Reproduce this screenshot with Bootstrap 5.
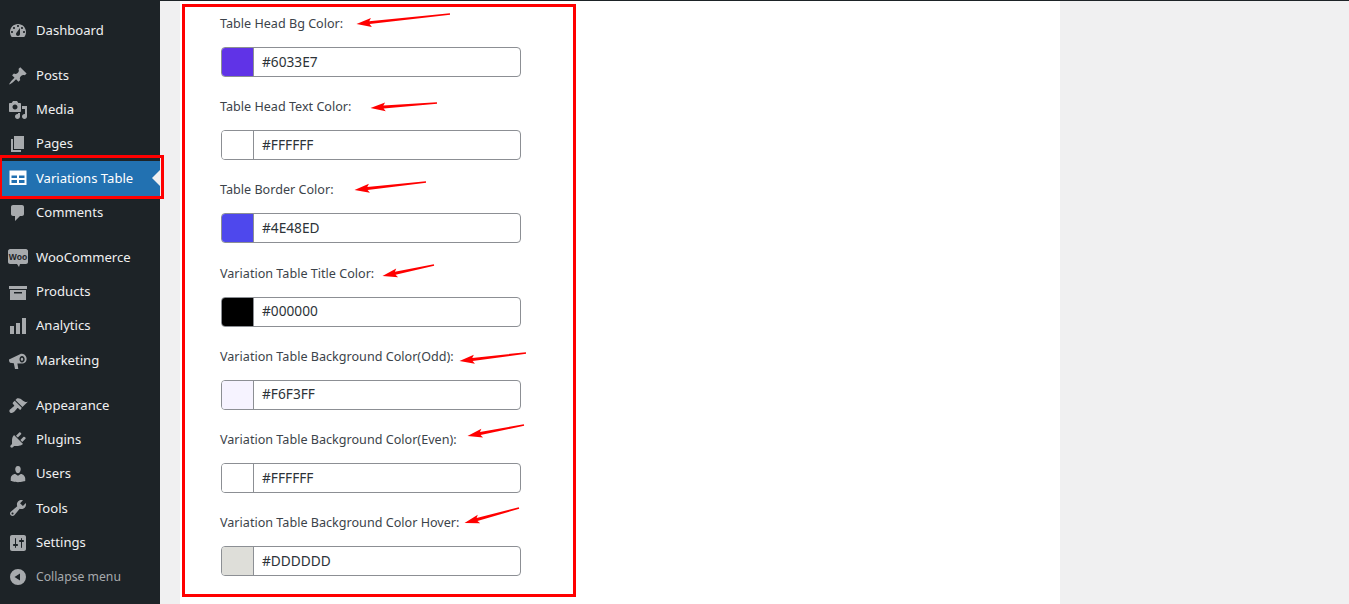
<!DOCTYPE html>
<html lang="en">
  <head>
    <meta charset="UTF-8" />
    <title>Variations Table settings</title>
    <link href="https://cdn.jsdelivr.net/npm/bootstrap@5.3.0/dist/css/bootstrap.min.css" rel="stylesheet" />
    <style>
      html, body { height: 604px; overflow: hidden; }
      body { background: #f0f0f1; font-family: "Noto Sans", "Liberation Sans", sans-serif; }
      .wp-side { width: 160px; height: 604px; background: #1d2327; padding-top: 13.4px; }
      .wp-item { height: 34.25px; color: #f0f0f1; font-size: 13.1px; padding-left: 8px; gap: 8px; position: relative; }
      .wp-item svg { width: 20px; height: 20px; fill: #a7aaad; flex: none; }
      .wp-gap { margin-top: 10.9px; }
      .wp-current { background: #2271b1; color: #fff; }
      .wp-current svg { fill: #fff; }
      .wp-current::after { content: ""; position: absolute; right: 0; top: 9px; border: 8px solid transparent; border-right-color: #f0f0f1; border-left-width: 0; }
      .wp-collapse { color: #a7aaad; font-size: 12.2px; }
      .wp-main { height: 604px; border-top: 1px solid #1d2327; padding-left: 20px; }
      .wp-panel { width: 880px; height: 603px; background: #fff; padding: 13.1px 0 0 40px; }
      .opt-row { height: 83.17px; }
      .opt-label { color: #3c434a; font-size: 12.6px; line-height: 20px; margin-bottom: 13px; }
      .opt-group { width: 300px; height: 30px; margin-left: 1px; border: 1px solid #8c8f94; border-radius: 4px; overflow: hidden; }
      .opt-swatch { width: 32px; border-right: 1px solid #8c8f94; flex: none; }
      .opt-value { color: #2c3338; font-size: 13.7px; padding-left: 8px; }
      .swatch-a { background: #6033e7; }
      .swatch-b { background: #fff; }
      .swatch-c { background: #4e48ed; }
      .swatch-d { background: #000; }
      .swatch-e { background: #f6f3ff; }
      .swatch-f { background: #deded9; }
      .mark-frame { position: absolute; border: 3px solid #f00; pointer-events: none; }
      .mark-form { left: 182px; top: 4px; width: 394px; height: 593px; }
      .mark-menu { left: -1px; top: 155px; width: 165px; height: 44px; }
      .mark-arrows { position: absolute; left: 0; top: 0; width: 1349px; height: 604px; fill: #f00; pointer-events: none; }
    </style>
  </head>
  <body>
    <div class="d-flex">
      <div class="wp-side">
        <div class="wp-item d-flex align-items-center">
          <svg viewBox="0 0 20 20"><path fill-rule="evenodd" d="M3.76 16h12.48c1.1-1.37 1.76-3.11 1.76-5 0-4.42-3.58-8-8-8s-8 3.58-8 8c0 1.89.66 3.63 1.76 5zM10 4c.55 0 1 .45 1 1s-.45 1-1 1-1-.45-1-1 .45-1 1-1zM6 6c.55 0 1 .45 1 1s-.45 1-1 1-1-.45-1-1 .45-1 1-1zm8 0c.55 0 1 .45 1 1s-.45 1-1 1-1-.45-1-1 .45-1 1-1zm-5.37 5.55L12 7v6c0 1.1-.9 2-2 2s-2-.9-2-2c0-.57.24-1.08.63-1.45zM4 10c.55 0 1 .45 1 1s-.45 1-1 1-1-.45-1-1 .45-1 1-1zm12 0c.55 0 1 .45 1 1s-.45 1-1 1-1-.45-1-1 .45-1 1-1z"/></svg>
          Dashboard
        </div>
        <div class="wp-item wp-gap d-flex align-items-center">
          <svg viewBox="0 0 20 20"><path d="M10.44 3.02l1.82-1.82 6.36 6.35-1.83 1.82c-1.05-.68-2.48-.57-3.41.36l-.75.75c-.92.93-1.04 2.35-.35 3.41l-1.83 1.82-2.41-2.41-2.8 2.79c-.42.42-3.38 2.71-3.8 2.29s1.86-3.39 2.28-3.81l2.79-2.79L4.1 9.36l1.83-1.82c1.05.69 2.48.57 3.4-.36l.75-.75c.93-.92 1.05-2.35.36-3.41z"/></svg>
          Posts
        </div>
        <div class="wp-item d-flex align-items-center">
          <svg viewBox="0 0 20 20"><path fill-rule="evenodd" d="M13 11V4c0-.55-.45-1-1-1h-1.67L9 1H5L3.67 3H2c-.55 0-1 .45-1 1v7c0 .55.45 1 1 1h10c.55 0 1-.45 1-1zM7 4.5c1.38 0 2.5 1.12 2.5 2.5S8.38 9.5 7 9.5 4.5 8.38 4.5 7 5.62 4.5 7 4.5zM14 6h5v10.5c0 1.38-1.12 2.5-2.5 2.5S14 17.88 14 16.5s1.12-2.5 2.5-2.5c.17 0 .34.02.5.05V9h-3V6zm-4 8.05V13h2v3.5c0 1.38-1.12 2.5-2.5 2.5S7 17.88 7 16.5 8.12 14 9.5 14c.17 0 .34.02.5.05z"/></svg>
          Media
        </div>
        <div class="wp-item d-flex align-items-center">
          <svg viewBox="0 0 20 20"><path d="M6 15V2h10v13H6zm-1 1h8v2H3V5h2v11z"/></svg>
          Pages
        </div>
        <div class="wp-item wp-current d-flex align-items-center">
          <svg viewBox="0 0 20 20"><path fill-rule="evenodd" d="M1.500 2.500h17v14.500h-17V2.500zm2 5v2.500h5.500V7.500H3.500zm7.500 0v2.500h5.500V7.500H11zm-7.500 4.500v3h5.500v-3H3.500zm7.500 0v3h5.500v-3H11z"/></svg>
          Variations Table
        </div>
        <div class="wp-item d-flex align-items-center">
          <svg viewBox="0 0 20 20"><path d="M5 2h9c1.1 0 2 .9 2 2v7c0 1.1-.9 2-2 2h-2l-5 5v-5H5c-1.1 0-2-.9-2-2V4c0-1.1.9-2 2-2z"/></svg>
          Comments
        </div>
        <div class="wp-item wp-gap d-flex align-items-center">
          <svg viewBox="0 0 20 20"><path d="M2 1h16c1 0 2 1 2 2v11c0 1-1 2-2 2h-6l-1 3-2-3H2c-1 0-2-1-2-2V3c0-1 1-2 2-2z"/><text x="10" y="11.500" text-anchor="middle" font-size="8.500" font-weight="700" fill="#1d2327" font-family="Liberation Sans, sans-serif">Woo</text></svg>
          WooCommerce
        </div>
        <div class="wp-item d-flex align-items-center">
          <svg viewBox="0 0 20 20"><path fill-rule="evenodd" d="M19 4v3H1V4h18zM2 8h16v10H2V8zm4 2v1.5h8V10H6z"/></svg>
          Products
        </div>
        <div class="wp-item d-flex align-items-center">
          <svg viewBox="0 0 20 20"><path d="M18 18V2h-4v16h4zm-6 0V7H8v11h4zm-6 0v-8H2v8h4z"/></svg>
          Analytics
        </div>
        <div class="wp-item d-flex align-items-center">
          <svg viewBox="0 0 20 20"><path fill-rule="evenodd" d="M1 8.500 12 3.200c2.600-1.200 5.600.4 6.400 3.200.8 2.900-.8 5.600-3.600 6L9.400 12.600l.9 5.400H7l-1.200-5.700-3.800-.5c-.7-.9-1.100-2.300-1-3.300zM14 5c-1.500 0-2.500 1.400-2.500 3.300s1 3.200 2.500 3.200 2.700-1.300 2.700-3.200S15.500 5 14 5zm0 1.800c.7 0 1.200.7 1.200 1.500s-.5 1.500-1.200 1.500-1.200-.7-1.200-1.500.5-1.500 1.200-1.500z"/></svg>
          Marketing
        </div>
        <div class="wp-item wp-gap d-flex align-items-center">
          <svg viewBox="0 0 20 20"><path d="M14.48 11.06L7.41 3.99l1.5-1.5c.5-.56 2.3-.47 3.51.32 1.21.8 1.43 1.28 2.91 2.1 1.18.64 2.45 1.26 4.45.85zm-.71.71L6.7 4.7 4.93 6.47c-.39.39-.39 1.02 0 1.41l1.06 1.06c.39.39.39 1.03 0 1.42-.6.6-1.43 1.11-2.21 1.69-.35.26-.7.53-1.01.84C1.43 13.23.75 15.13 2 16.38c1.25 1.25 3.15.57 4.49-.77.31-.31.58-.66.84-1.01.58-.78 1.09-1.61 1.69-2.21.39-.39 1.03-.39 1.42 0l1.06 1.06c.39.39 1.02.39 1.41 0z"/></svg>
          Appearance
        </div>
        <div class="wp-item d-flex align-items-center">
          <svg viewBox="0 0 20 20"><path d="M13.11 4.36L9.87 7.6 8 5.73l3.24-3.24c.35-.34 1.05-.2 1.56.32.52.51.66 1.21.31 1.55zm-8 1.77l.91-1.12 9.01 9.01-1.19.84c-.71.71-2.63 1.16-3.82 1.16H6.14L4.9 17.26c-.59.59-1.54.59-2.12 0-.59-.58-.59-1.53 0-2.12l1.24-1.24v-3.88c0-1.13.4-3.19 1.09-3.89zm7.26 3.97l3.24-3.24c.34-.35 1.04-.21 1.55.31.52.51.66 1.21.31 1.55l-3.24 3.25z"/></svg>
          Plugins
        </div>
        <div class="wp-item d-flex align-items-center">
          <svg viewBox="0 0 20 20"><path d="M10 9.250c-2.270 0-2.730-3.440-2.730-3.440C7 4.020 7.820 2 9.970 2c2.160 0 2.980 2.020 2.710 3.810 0 0-.41 3.440-2.680 3.440zm0 2.570L12.720 10c2.390 0 4.520 2.330 4.520 4.530v2.490s-3.650 1.130-7.240 1.130c-3.650 0-7.240-1.130-7.240-1.130v-2.490c0-2.250 1.940-4.480 4.470-4.480z"/></svg>
          Users
        </div>
        <div class="wp-item d-flex align-items-center">
          <svg viewBox="0 0 20 20"><path fill-rule="evenodd" d="M16.68 9.77c-1.34 1.34-3.3 1.67-4.95.99l-5.41 6.52c-.99.99-2.59.99-3.58 0s-.99-2.59 0-3.57l6.52-5.42c-.68-1.65-.35-3.61.99-4.95 1.28-1.28 3.12-1.62 4.72-1.06l-2.89 2.89 2.82 2.82 2.86-2.87c.53 1.58.18 3.39-1.08 4.65zM3.81 16.21c.4.39 1.04.39 1.43 0 .4-.4.4-1.04 0-1.43-.39-.4-1.03-.4-1.43 0-.39.39-.39 1.03 0 1.43z"/></svg>
          Tools
        </div>
        <div class="wp-item d-flex align-items-center">
          <svg viewBox="0 0 20 20"><path fill-rule="evenodd" d="M18 16V4c0-1.100-.9-2-2-2H4c-1.100 0-2 .9-2 2v12c0 1.100.9 2 2 2h12c1.100 0 2-.9 2-2zM8 11h1c.55 0 1 .45 1 1s-.45 1-1 1H8v1.500c0 .28-.22.5-.5.5s-.5-.22-.5-.5V13H6c-.55 0-1-.45-1-1s.45-1 1-1h1V5.500c0-.28.22-.5.5-.5s.5.22.5.5V11zm5-2h-1c-.55 0-1-.45-1-1s.45-1 1-1h1V5.500c0-.28.22-.5.5-.5s.5.22.5.5V7h1c.55 0 1 .45 1 1s-.45 1-1 1h-1v5.500c0 .28-.22.5-.5.5s-.5-.22-.5-.5V9z"/></svg>
          Settings
        </div>
        <div class="wp-item wp-collapse d-flex align-items-center">
          <svg viewBox="0 0 20 20"><path fill-rule="evenodd" d="M10 2a8 8 0 1 0 0 16 8 8 0 0 0 0-16zm2 4.500v7L6.500 10z"/></svg>
          Collapse menu
        </div>
      </div>

      <div class="wp-main flex-grow-1">
        <div class="wp-panel">
          <div class="opt-row">
            <div class="opt-label">Table Head Bg Color:</div>
            <div class="opt-group d-flex"><div class="opt-swatch swatch-a"></div><div class="opt-value d-flex align-items-center">#6033E7</div></div>
          </div>
          <div class="opt-row">
            <div class="opt-label">Table Head Text Color:</div>
            <div class="opt-group d-flex"><div class="opt-swatch swatch-b"></div><div class="opt-value d-flex align-items-center">#FFFFFF</div></div>
          </div>
          <div class="opt-row">
            <div class="opt-label">Table Border Color:</div>
            <div class="opt-group d-flex"><div class="opt-swatch swatch-c"></div><div class="opt-value d-flex align-items-center">#4E48ED</div></div>
          </div>
          <div class="opt-row">
            <div class="opt-label">Variation Table Title Color:</div>
            <div class="opt-group d-flex"><div class="opt-swatch swatch-d"></div><div class="opt-value d-flex align-items-center">#000000</div></div>
          </div>
          <div class="opt-row">
            <div class="opt-label">Variation Table Background Color(Odd):</div>
            <div class="opt-group d-flex"><div class="opt-swatch swatch-e"></div><div class="opt-value d-flex align-items-center">#F6F3FF</div></div>
          </div>
          <div class="opt-row">
            <div class="opt-label">Variation Table Background Color(Even):</div>
            <div class="opt-group d-flex"><div class="opt-swatch swatch-b"></div><div class="opt-value d-flex align-items-center">#FFFFFF</div></div>
          </div>
          <div class="opt-row">
            <div class="opt-label">Variation Table Background Color Hover:</div>
            <div class="opt-group d-flex"><div class="opt-swatch swatch-f"></div><div class="opt-value d-flex align-items-center">#DDDDDD</div></div>
          </div>
        </div>
      </div>
    </div>

    <!-- red markup drawn on top of the screenshot -->
    <div class="mark-frame mark-form"></div>
    <div class="mark-frame mark-menu"></div>
    <svg class="mark-arrows" id="arrows" viewBox="0 0 1349 604"></svg>

    <script>
      // tail x, tail y, head x, head y
      const arrows = [
        [450, 14, 356.5, 24],
        [437, 103, 370.5, 108],
        [426, 182, 354.5, 190],
        [434, 265, 382.5, 276],
        [526, 353, 459.5, 361],
        [524, 425, 467.5, 436],
        [519, 508, 464.5, 523],
      ];
      const box = document.getElementById("arrows");
      arrows.forEach(([tx, ty, hx, hy]) => {
        const len = Math.hypot(tx - hx, ty - hy);
        const ux = (tx - hx) / len;
        const uy = (ty - hy) / len;
        const at = (along, side) => `${hx + ux * along - uy * side},${hy + uy * along + ux * side}`;
        const pts = [at(0, 0), at(15, -4.5), at(13, -1.5), at(len, -0.8), at(len, 0.8), at(13, 1.5), at(15, 4.5)];
        const poly = document.createElementNS("http://www.w3.org/2000/svg", "polygon");
        poly.setAttribute("points", pts.join(" "));
        box.appendChild(poly);
      });
    </script>
    <script src="https://cdn.jsdelivr.net/npm/bootstrap@5.3.0/dist/js/bootstrap.bundle.min.js"></script>
  </body>
</html>
